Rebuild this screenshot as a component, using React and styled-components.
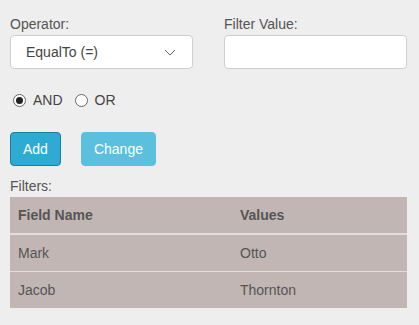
import React, { useState } from "react";
import styled, { createGlobalStyle } from "styled-components";

const GlobalStyle = createGlobalStyle`
  body {
    margin: 0;
    background: #eeeeee;
    font-family: "Liberation Sans", Arial, sans-serif;
    color: #444;
  }
`;

const Page = styled.div`
  padding: 14px 12px 0 10px;
`;

const FieldRow = styled.div`
  display: flex;
  gap: 31px;
`;

const Field = styled.div`
  display: flex;
  flex-direction: column;
  width: 183px;
`;

const Label = styled.label`
  font-size: 14px;
  color: #555;
  line-height: 16px;
  margin-top: 2px;
  margin-bottom: 3px;
`;

const Box = styled.div`
  box-sizing: border-box;
  height: 34px;
  background: #fff;
  border: 1px solid #cfcfcf;
  border-radius: 4px;
  display: flex;
  align-items: center;
  justify-content: space-between;
  padding: 0 16px 0 15px;
  font-size: 14px;
  color: #444;
`;

const RadioRow = styled.div`
  display: flex;
  align-items: center;
  margin-top: 22px;
  height: 18px;
  font-size: 14px;
  color: #444;
`;

const RadioOption = styled.span`
  display: flex;
  align-items: center;
  margin-right: 9px;
  cursor: pointer;
`;

const Circle = styled.span`
  box-sizing: border-box;
  width: 13px;
  height: 13px;
  border-radius: 50%;
  border: 1px solid #666;
  background: #fff;
  margin: 0 7px 0 3px;
  display: flex;
  align-items: center;
  justify-content: center;
  &::after {
    content: "";
    width: 7px;
    height: 7px;
    border-radius: 50%;
    background: ${(p) => (p.checked ? "#222" : "transparent")};
  }
`;

const Buttons = styled.div`
  display: flex;
  gap: 20px;
  margin-top: 23px;
`;

const Button = styled.button`
  box-sizing: border-box;
  height: 34px;
  padding: 0 12px;
  font-family: inherit;
  font-size: 14px;
  color: #fff;
  border-radius: 4px;
  border: 1px solid ${(p) => (p.light ? "#5bc0de" : "#1b7fa1")};
  background: ${(p) => (p.light ? "#5bc0de" : "#2eabd2")};
  cursor: pointer;
`;

const Caption = styled.div`
  font-size: 14px;
  color: #555;
  margin-top: 13px;
  line-height: 15px;
`;

const Table = styled.table`
  width: 397px;
  border-collapse: collapse;
  margin-top: 3px;
  background: #c1b6b4;
  font-size: 14px;
  color: #555;
  th,
  td {
    text-align: left;
    padding: 0 8px;
    height: 36px;
  }
  th {
    font-weight: bold;
    border-bottom: 2px solid #e2dedd;
  }
  tbody tr + tr td {
    border-top: 1px solid #e2dedd;
  }
  th:first-child,
  td:first-child {
    width: 206px;
  }
`;

const App = () => {
  const [mode, setMode] = useState("AND");
  const filters = [
    { field: "Mark", value: "Otto" },
    { field: "Jacob", value: "Thornton" },
  ];

  return (
    <>
      <GlobalStyle />
      <Page>
        <FieldRow>
          <Field>
            <Label>Operator:</Label>
            <Box>
              <span>EqualTo (=)</span>
              <svg width="12" height="7" viewBox="0 0 12 7">
                <path d="M1 1l5 5 5-5" fill="none" stroke="#666" strokeWidth="1" />
              </svg>
            </Box>
          </Field>
          <Field>
            <Label>Filter Value:</Label>
            <Box />
          </Field>
        </FieldRow>
        <RadioRow>
          <RadioOption onClick={() => setMode("AND")}>
            <Circle checked={mode === "AND"} />
            AND
          </RadioOption>
          <RadioOption onClick={() => setMode("OR")}>
            <Circle checked={mode === "OR"} />
            OR
          </RadioOption>
        </RadioRow>
        <Buttons>
          <Button>Add</Button>
          <Button light>Change</Button>
        </Buttons>
        <Caption>Filters:</Caption>
        <Table>
          <thead>
            <tr>
              <th>Field Name</th>
              <th>Values</th>
            </tr>
          </thead>
          <tbody>
            {filters.map((f) => (
              <tr key={f.field}>
                <td>{f.field}</td>
                <td>{f.value}</td>
              </tr>
            ))}
          </tbody>
        </Table>
      </Page>
    </>
  );
};

export default App;
